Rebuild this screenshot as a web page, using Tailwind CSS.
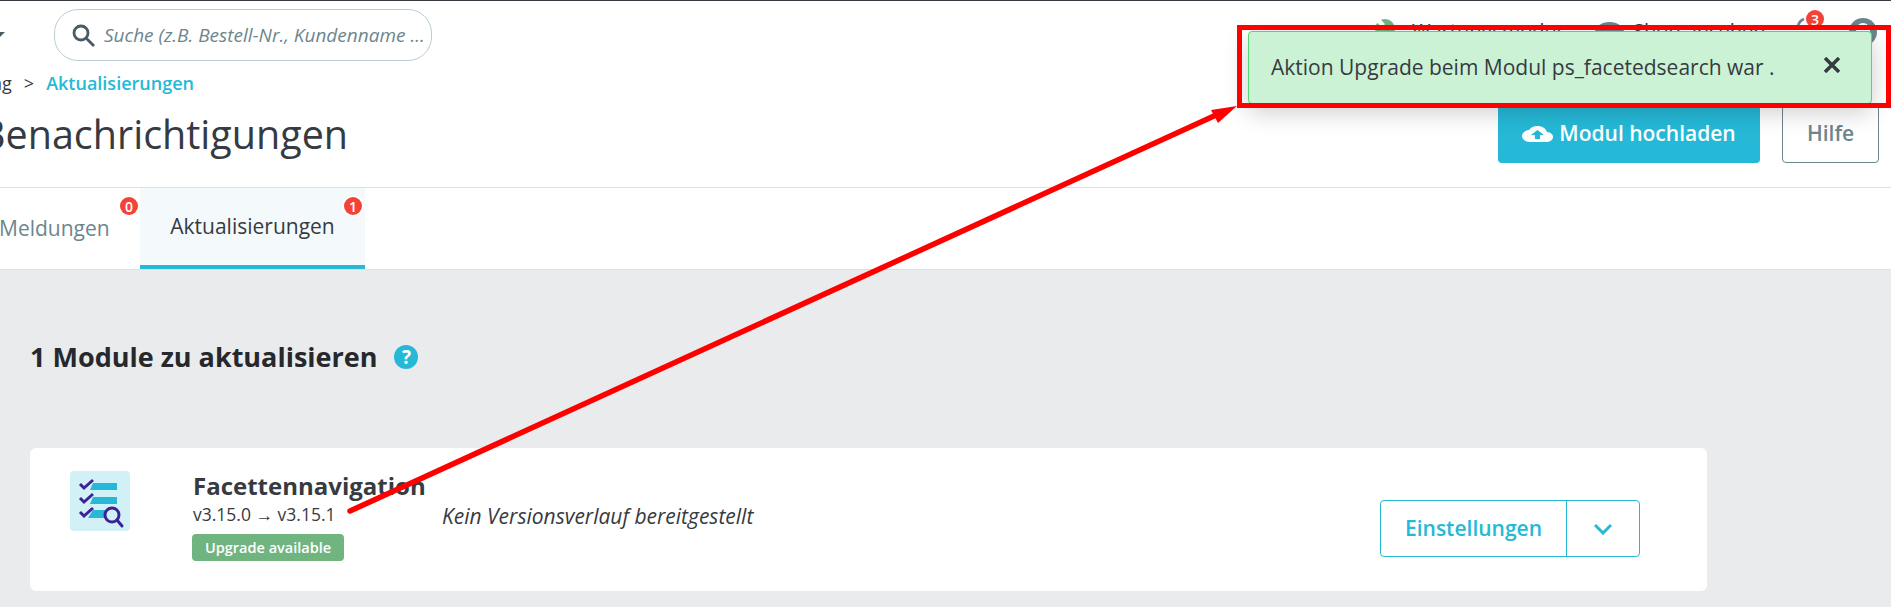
<!DOCTYPE html>
<html lang="de">
<head>
    <meta charset="UTF-8">
    <title>Benachrichtigungen</title>
    <script src="https://cdn.jsdelivr.net/npm/@tailwindcss/browser@4"></script>
</head>
<body class="relative flex h-[607px] w-[1891px] flex-col overflow-hidden bg-white font-['Open_Sans',sans-serif] text-[#363a41]">

    <!-- Top bar -->
    <header class="flex h-[70px] shrink-0 items-start border-t border-[#363a41] pt-[8px]">
        <div class="mt-[23px] h-0 w-0 border-x-[5px] border-t-[5px] border-x-transparent border-t-[#4a5b63] ml-[-5px]"></div>
        <div class="ml-[49px] flex h-[52px] w-[378px] shrink-0 items-center rounded-[24px] border border-[#bbcdd2] pl-[16px]">
            <svg class="h-[24px] w-[24px] shrink-0" viewBox="0 0 24 24" fill="none" stroke="#4a5b63" stroke-width="2.8"><circle cx="10" cy="10" r="7"/><path d="M15 15l8 8"/></svg>
            <span class="ml-[9px] whitespace-nowrap text-[19px] text-[#6c868e] italic">Suche (z.B. Bestell-Nr., Kundenname ...</span>
        </div>
        <div class="ml-[943px] mt-[8px] flex h-[30px] items-start">
            <svg class="h-[26px] w-[20px]" viewBox="0 0 20 26"><circle cx="10" cy="12" r="10" fill="#70b580"/><path d="M3 0l7 7-3 3-6-5z" fill="#fff"/></svg>
            <span class="ml-[17px] w-[158px] whitespace-nowrap text-[20px] leading-[28px]">Wartungsmodus</span>
            <svg class="ml-[25px] mt-[5px] h-[20px] w-[29px]" viewBox="0 0 29 20"><ellipse cx="14.5" cy="10" rx="14.5" ry="10" fill="#6c868e"/></svg>
            <span class="ml-[9px] whitespace-nowrap text-[20px] leading-[28px]">Shop ansehen</span>
        </div>
    </header>

    <!-- Breadcrumb, title and actions -->
    <section class="flex h-[118px] shrink-0 justify-between border-b border-[#dfdfdf]">
        <div class="overflow-hidden">
            <nav class="flex h-[26px] items-center whitespace-nowrap text-[18px]">
                <span class="ml-[-108px]">Aktualisierung</span>
                <span class="ml-[12px]">&gt;</span>
                <span class="ml-[12px] font-semibold text-[#25b9d7]">Aktualisierungen</span>
            </nav>
            <h1 class="ml-[-20px] mt-[13px] whitespace-nowrap text-[39.5px] leading-[50px]">Benachrichtigungen</h1>
        </div>
        <div class="mr-[12px] mt-[35px] flex h-[58px] gap-[22px]">
            <button class="flex w-[262px] items-center justify-center gap-[6px] rounded-[4px] bg-[#25b9d7] text-[21px] font-semibold text-white">
                <svg class="h-[24px] w-[31px]" viewBox="0 0 24 24" fill="#fff" preserveAspectRatio="none"><path d="M19.35 10.04C18.67 6.59 15.64 4 12 4 9.11 4 6.6 5.64 5.35 8.04 2.34 8.36 0 10.91 0 14c0 3.31 2.69 6 6 6h13c2.76 0 5-2.24 5-5 0-2.64-2.05-4.78-4.65-4.96zM14 13v4h-4v-4H7l5-5 5 5h-3z"/></svg>
                Modul hochladen
            </button>
            <button class="w-[97px] rounded-[4px] border border-[#6c868e] text-[21px] font-semibold text-[#6c868e]">Hilfe</button>
        </div>
    </section>

    <!-- Tabs -->
    <nav class="flex h-[82px] shrink-0 items-stretch border-b border-[#dfdfdf] text-[21px]">
        <div class="relative flex w-[140px] items-center text-[#6c868e]">
            <span class="ml-[-1px]">Meldungen</span>
            <span class="absolute left-[120px] top-[9px] flex h-[18px] w-[18px] items-center justify-center rounded-full bg-[#f44336] text-[14px] font-semibold text-white">0</span>
        </div>
        <div class="relative flex w-[225px] items-center justify-center border-b-4 border-[#25b9d7] bg-[#f4f9fb]">
            <span>Aktualisierungen</span>
            <span class="absolute left-[204px] top-[9px] flex h-[18px] w-[18px] items-center justify-center rounded-full bg-[#f44336] text-[14px] font-semibold text-white ring-2 ring-white">1</span>
        </div>
    </nav>

    <!-- Module list -->
    <main class="flex-1 bg-[#eaebec] pl-[30px]">
        <div class="mt-[69px] flex h-[36px] items-center">
            <h2 class="text-[27px] font-bold text-[#25282d]">1 Module zu aktualisieren</h2>
            <span class="ml-[17px] flex h-[24px] w-[24px] items-center justify-center rounded-full bg-[#25b9d7] text-[19px] font-bold text-white">?</span>
        </div>

        <div class="mt-[73px] flex h-[143px] w-[1677px] items-start rounded-[6px] bg-white">
            <svg class="ml-[40px] mt-[23px] h-[60px] w-[60px] shrink-0" viewBox="0 0 60 60">
                <rect width="60" height="60" rx="4" fill="#d2f1f7"/>
                <path d="M23 12h24v7H20zM23 26h24v7H20zM23 39h13l-2 8H18z" fill="#25b9d7"/>
                <g fill="none" stroke="#3c2299" stroke-width="3">
                    <path d="M10 13l4 4 9-8M10 27l4 4 9-8M10 41l4 4 9-8"/>
                    <circle cx="42" cy="44" r="7"/>
                    <path d="M47 49l5 6" stroke-linecap="round"/>
                </g>
            </svg>
            <div class="ml-[63px] w-[249px] shrink-0 pt-[24px]">
                <h3 class="text-[24px] leading-[28px] font-bold whitespace-nowrap">Facettennavigation</h3>
                <p class="text-[17.5px] leading-[28px] whitespace-nowrap">v3.15.0 → v3.15.1</p>
                <span class="-ml-[1px] mt-[6px] inline-block h-[27px] rounded-[4px] bg-[#70b580] px-[13px] text-[14.5px] leading-[27px] font-semibold whitespace-nowrap text-white">Upgrade available</span>
            </div>
            <p class="mt-[55px] text-[21px] leading-[26px] whitespace-nowrap italic">Kein Versionsverlauf bereitgestellt</p>
            <div class="ml-auto mr-[67px] mt-[52px] flex h-[57px] w-[260px] rounded-[4px] border border-[#25b9d7] text-[#25b9d7]">
                <span class="flex w-[186px] items-center justify-center border-r border-[#25b9d7] text-[21px] font-semibold">Einstellungen</span>
                <span class="flex flex-1 items-center justify-center">
                    <svg class="h-[12px] w-[18px]" viewBox="0 0 18 12" fill="none" stroke="#25b9d7" stroke-width="3"><path d="M1 2l8 8 8-8"/></svg>
                </span>
            </div>
        </div>
    </main>

    <!-- Header icons peeking above the toast -->
    <svg class="absolute left-[1795px] top-[17px] h-[24px] w-[18px]" viewBox="0 0 18 24" fill="none" stroke="#6c868e" stroke-width="2.5"><path d="M3 9c1-4 3-6 6-7M2 18h14"/></svg>
    <span class="absolute left-[1806px] top-[10px] flex h-[18px] w-[18px] items-center justify-center rounded-full bg-[#f44336] text-[14px] font-semibold text-white">3</span>
    <svg class="absolute left-[1849px] top-[18px] h-[28px] w-[28px]" viewBox="0 0 28 28"><circle cx="14" cy="14" r="14" fill="#6c868e"/><circle cx="14" cy="12" r="7" fill="#fff"/></svg>

    <!-- Toast -->
    <div class="absolute left-[1248px] top-[31px] flex h-[73px] w-[624px] items-center rounded-[4px] border border-[#53d572] bg-[#cbf2d4] pl-[22px] pr-[31px] text-[21px] shadow-[0_8px_24px_0_rgba(0,0,0,0.2)]">
        <span>Aktion Upgrade beim Modul ps_facetedsearch war .</span>
        <svg class="ml-auto mb-[6px] h-[16px] w-[16px]" viewBox="0 0 16 16" stroke="#363a41" stroke-width="3.5"><path d="M1 1l14 14M15 1L1 15"/></svg>
    </div>

    <!-- Red annotation: frame and arrow -->
    <div class="absolute left-[1237px] top-[25px] h-[83px] w-[654px] border-[5px] border-[#ff0000]"></div>
    <svg class="absolute left-0 top-0 h-[607px] w-[1891px]" viewBox="0 0 1891 607" fill="#ff0000">
        <path d="M350 511L1214 116" stroke="#ff0000" stroke-width="5.5" stroke-linecap="round"/>
        <path d="M1237 106L1211 110L1218 123z"/>
    </svg>

</body>
</html>
